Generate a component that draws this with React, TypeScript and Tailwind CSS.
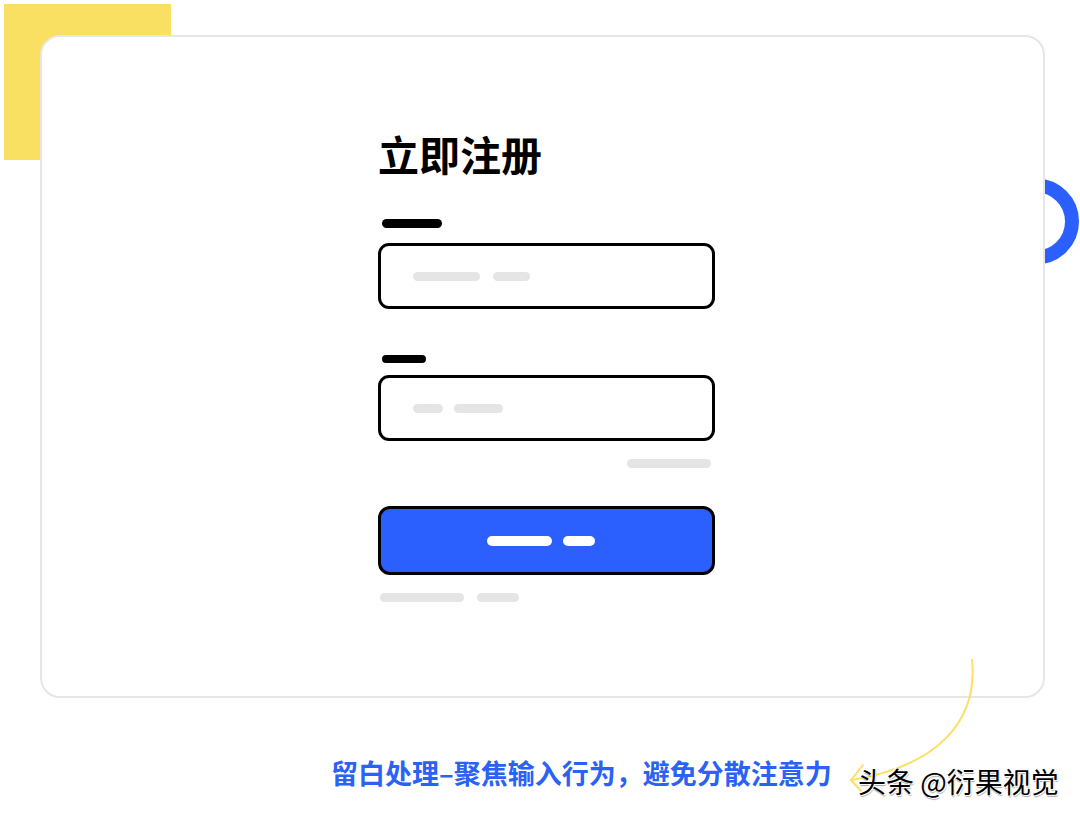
import React from 'react';

const cjk = { fontFamily: '"Noto Sans CJK SC", "Noto Sans", sans-serif' };

const Bar = ({ w, className }: { w: string; className: string }) => (
  <div className={`${w} ${className} rounded-full`} />
);

const App: React.FC = () => {
  return (
    <div className="relative w-[1080px] h-[821px] bg-white overflow-hidden" style={cjk}>
      {/* decorations behind the card */}
      <div className="absolute left-[4px] top-[4px] w-[167px] h-[156px] bg-[#fae062]" />
      <svg className="absolute left-[990px] top-[175px]" width="92" height="94" viewBox="0 0 92 94">
        <circle cx="46" cy="46.5" r="36" fill="none" stroke="#2b60ff" strokeWidth="14" />
      </svg>

      <div className="relative ml-[40px] mt-[35px] w-[1005px] h-[663px] bg-white border-2 border-[#e6e6e6] rounded-[20px]">
        <div className="ml-[336px] pt-[96px] w-[337px] flex flex-col">
          <h1 className="text-[41px] leading-none font-bold text-black">立即注册</h1>

          <Bar w="w-[60px]" className="h-[9px] bg-black mt-[45px] ml-[4px]" />
          <div className="mt-[15px] h-[66px] border-[3px] border-black rounded-[11px] flex items-center gap-[13px] pl-[32px]">
            <Bar w="w-[67px]" className="h-[9px] bg-[#e5e5e5]" />
            <Bar w="w-[37px]" className="h-[9px] bg-[#e5e5e5]" />
          </div>

          <Bar w="w-[44px]" className="h-[8px] bg-black mt-[46px] ml-[4px]" />
          <div className="mt-[12px] h-[66px] border-[3px] border-black rounded-[11px] flex items-center gap-[11px] pl-[32px]">
            <Bar w="w-[30px]" className="h-[9px] bg-[#e5e5e5]" />
            <Bar w="w-[49px]" className="h-[9px] bg-[#e5e5e5]" />
          </div>

          <div className="mt-[18px] flex justify-end pr-[4px]">
            <Bar w="w-[84px]" className="h-[9px] bg-[#e5e5e5]" />
          </div>

          <div className="mt-[38px] h-[69px] bg-[#2b60ff] border-[3px] border-black rounded-[12px] flex items-center justify-center gap-[11px] pr-[11px]">
            <Bar w="w-[65px]" className="h-[10px] bg-white" />
            <Bar w="w-[32px]" className="h-[10px] bg-white" />
          </div>

          <div className="mt-[18px] flex gap-[13px] pl-[2px]">
            <Bar w="w-[84px]" className="h-[9px] bg-[#e5e5e5]" />
            <Bar w="w-[42px]" className="h-[9px] bg-[#e5e5e5]" />
          </div>
        </div>
      </div>

      <div className="flex items-start ml-[331px] mt-[61px]">
        <p className="text-[27px] leading-none font-bold text-[#2b62f6] whitespace-nowrap">
          留白处理–聚焦输入行为，避免分散注意力
        </p>
      </div>

      {/* site watermark and hand-drawn arrow */}
      <svg className="absolute left-[840px] top-[650px]" width="150" height="160" viewBox="0 0 150 160">
        <path d="M132 10 C138 70 100 115 12 130" fill="none" stroke="#fbe064" strokeWidth="2" strokeLinecap="round" />
        <path d="M23 115 L11 130 L23 143" fill="none" stroke="#fbe064" strokeWidth="2" strokeLinecap="round" strokeLinejoin="round" />
      </svg>
      <div
        className="absolute left-[858px] top-[767px] text-[28px] leading-none text-black whitespace-nowrap"
        style={{ textShadow: '1px 1px 0 #fff, -1px -1px 0 #fff, 1px 2px 1px rgba(0,0,0,0.35)' }}
      >
        头条 @衍果视觉
      </div>
    </div>
  );
};

export default App;
